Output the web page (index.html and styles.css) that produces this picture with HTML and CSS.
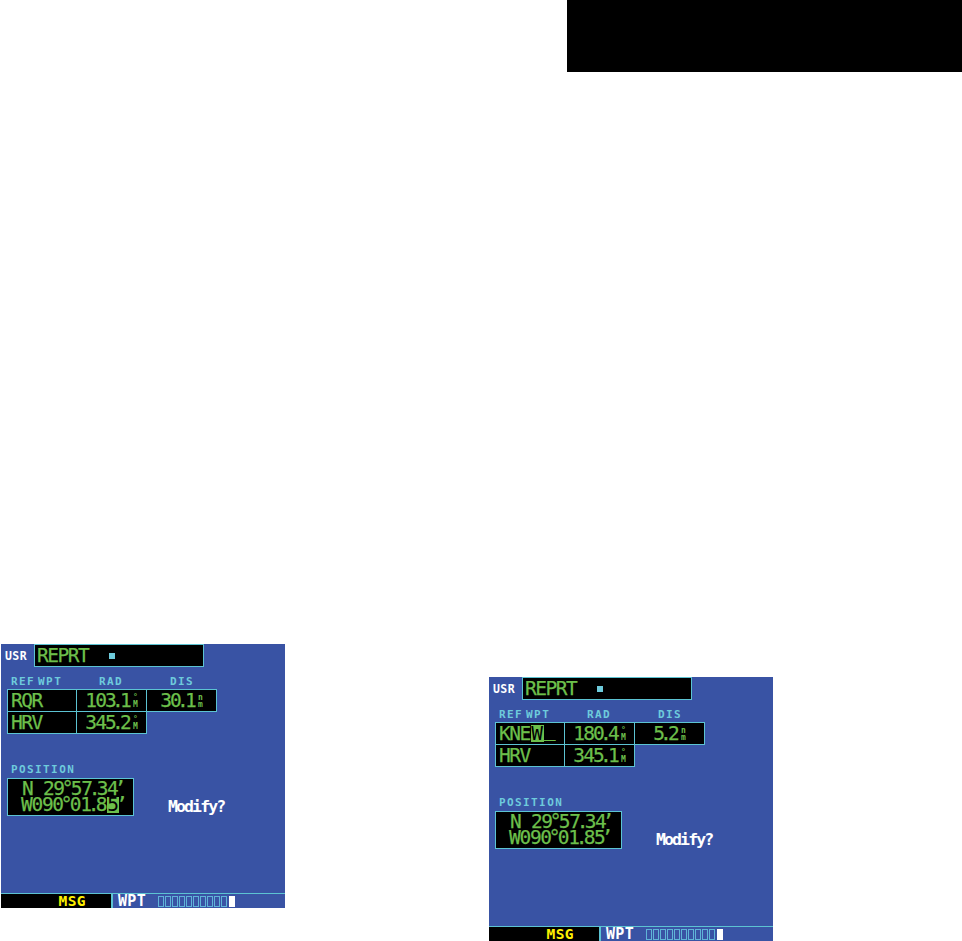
FILE: index.html
```html
<!DOCTYPE html>
<html lang="en">
<head>
<meta charset="utf-8">
<title>Waypoint screens</title>
<link rel="stylesheet" href="styles.css">
</head>
<body>
<div class="band"></div>
<main class="screens">
  <section class="screen screen-left">
    <div class="title-row"><span class="usr">USR</span><div class="name-box"><span class="green name">REPRT</span><i class="dot"></i></div></div>
    <div class="heads"><span class="head h1">REF WPT</span><span class="head h2">RAD</span><span class="head h3">DIS</span></div>
    <div class="table">
      <div class="cell c-id green">RQR</div>
      <div class="cell c-val green">103<span class="n">.</span>1<span class="unit"><b>°</b><b>M</b></span></div>
      <div class="cell c-val green">30<span class="n">.</span>1<span class="unit"><b>n</b><b>m</b></span></div>
      <div class="cell c-id green">HRV</div>
      <div class="cell c-val green">345<span class="n">.</span>2<span class="unit"><b>°</b><b>M</b></span></div>
    </div>
    <div class="lower">
      <div class="pos-col">
        <span class="head">POSITION</span>
        <div class="pos-box green"><div>N 29<span class="d">°</span>57<span class="n">.</span>34<span class="q">’</span></div><div>W090<span class="d">°</span>01<span class="n">.</span>8<span class="cursor">5</span><span class="q">’</span></div></div>
      </div>
      <div class="modify">Modify?</div>
    </div>
    <div class="status">
      <div class="msg">MSG</div>
      <div class="wpt-area"><span class="wpt">WPT</span><div class="pages"><i></i><i></i><i></i><i></i><i></i><i></i><i></i><i></i><i></i><i></i><i class="on"></i></div></div>
    </div>
  </section>
  <section class="screen screen-right">
    <div class="title-row"><span class="usr">USR</span><div class="name-box"><span class="green name">REPRT</span><i class="dot"></i></div></div>
    <div class="heads"><span class="head h1">REF WPT</span><span class="head h2">RAD</span><span class="head h3">DIS</span></div>
    <div class="table">
      <div class="cell c-id green">KNE<span class="cursor">W</span><span class="under">_</span></div>
      <div class="cell c-val green">180<span class="n">.</span>4<span class="unit"><b>°</b><b>M</b></span></div>
      <div class="cell c-val green">5<span class="n">.</span>2<span class="unit"><b>n</b><b>m</b></span></div>
      <div class="cell c-id green">HRV</div>
      <div class="cell c-val green">345<span class="n">.</span>1<span class="unit"><b>°</b><b>M</b></span></div>
    </div>
    <div class="lower">
      <div class="pos-col">
        <span class="head">POSITION</span>
        <div class="pos-box green"><div>N 29<span class="d">°</span>57<span class="n">.</span>34<span class="q">’</span></div><div>W090<span class="d">°</span>01<span class="n">.</span>85<span class="q">’</span></div></div>
      </div>
      <div class="modify">Modify?</div>
    </div>
    <div class="status">
      <div class="msg">MSG</div>
      <div class="wpt-area"><span class="wpt">WPT</span><div class="pages"><i></i><i></i><i></i><i></i><i></i><i></i><i></i><i></i><i></i><i></i><i class="on"></i></div></div>
    </div>
  </section>
</main>
</body>
</html>
```
FILE: styles.css
```css
* { box-sizing: border-box; }
html, body { margin: 0; padding: 0; background: #fff; overflow: hidden; height: 941px; }
.band { width: 395px; height: 72px; margin-left: 567px; background: #000; }
.screens { display: flex; align-items: flex-start; }
.screen { width: 284px; height: 264px; background: #3953a4; display: flex; flex-direction: column; font-family: "DejaVu Sans Mono", monospace; }
.screen-left { margin-top: 572px; margin-left: 1px; }
.screen-right { margin-top: 605px; margin-left: 204px; }
.green { color: #6cbf4b; -webkit-text-stroke: 0.25px #6cbf4b; }
.title-row { display: flex; align-items: center; height: 23px; padding-left: 4px; }
.usr { width: 29px; color: #fff; font-weight: bold; font-size: 11.5px; letter-spacing: 0.4px; }
.name-box { width: 170px; height: 23px; background: #000; border: 1px solid #5cc3d2; display: flex; align-items: center; }
.name { font-size: 19.5px; width: 74px; padding-left: 2px; letter-spacing: -1.5px; }
.dot { width: 6px; height: 6px; background: #6ecbdc; }
.heads { display: flex; height: 22px; padding-top: 10px; }
.head { color: #6ecbdc; font-weight: bold; font-size: 11px; letter-spacing: 1.4px; line-height: 10px; display: block; white-space: nowrap; }
.h1 { margin-left: 10px; width: 88px; word-spacing: -5px; }
.h2 { width: 71px; }
.h3 { width: 40px; }
.table { display: grid; grid-template-columns: 69px 70px 70px; grid-auto-rows: 22px; margin-left: 6px; width: 210px; }
.cell { background: #000; border: 1px solid #5cc3d2; margin: 0 -1px -1px 0; font-size: 19.5px; line-height: 20px; display: flex; align-items: center; white-space: nowrap; letter-spacing: -1.8px; }
.c-id { padding-left: 3px; letter-spacing: -1.5px; }
.c-val { justify-content: center; }
.n, .d, .q { display: inline-block; }
.n { width: 5px; text-indent: -3px; }
.d { width: 7px; text-indent: -2px; }
.q { width: 4px; text-indent: -3px; }
.under { display: inline-block; transform: translateY(-4px); }
.unit { display: inline-flex; flex-direction: column; margin-left: 3px; color: #6cbf4b; letter-spacing: 0; -webkit-text-stroke: 0; }
.unit b { font-size: 8px; line-height: 7px; font-weight: bold; display: block; }
.cursor { background: #6cbf4b; color: #000; -webkit-text-stroke: 0; display: inline-block; line-height: 17px; height: 17px; width: 13px; margin-left: 1px; text-align: center; letter-spacing: 0; }
.lower { display: flex; margin-left: 6px; margin-top: 32px; }
.pos-col { width: 161px; }
.pos-col .head { margin-left: 4px; }
.pos-box { width: 127px; height: 38px; margin-top: 3px; background: #000; border: 1px solid #5cc3d2; font-size: 19.5px; line-height: 16px; padding: 2px 0 0 14px; white-space: nowrap; letter-spacing: -1.3px; }
.pos-box div + div { margin-left: -1px; }
.pos-box .cursor { line-height: 16px; height: 16px; vertical-align: top; width: 12px; }
.modify { color: #fff; font-size: 16.5px; font-weight: bold; margin-top: 32px; letter-spacing: -1.9px; white-space: nowrap; }
.status { margin-top: auto; height: 15px; display: flex; border-top: 1px solid #5cc3d2; }
.msg { width: 112px; background: #000; color: #fff200; font-weight: bold; font-size: 14.5px; line-height: 14px; text-align: right; padding-right: 25px; border-right: 2px solid #5cc3d2; letter-spacing: 0.4px; }
.wpt-area { display: flex; align-items: center; padding-left: 5px; gap: 12px; }
.wpt { color: #fff; font-weight: bold; font-size: 15px; line-height: 14px; letter-spacing: 0.3px; }
.pages { display: flex; gap: 1px; height: 11px; }
.pages i { width: 6px; border: 1px solid #5fb4d8; }
.pages i.on { background: #fff; border-color: #fff; margin-left: 1px; }
```
